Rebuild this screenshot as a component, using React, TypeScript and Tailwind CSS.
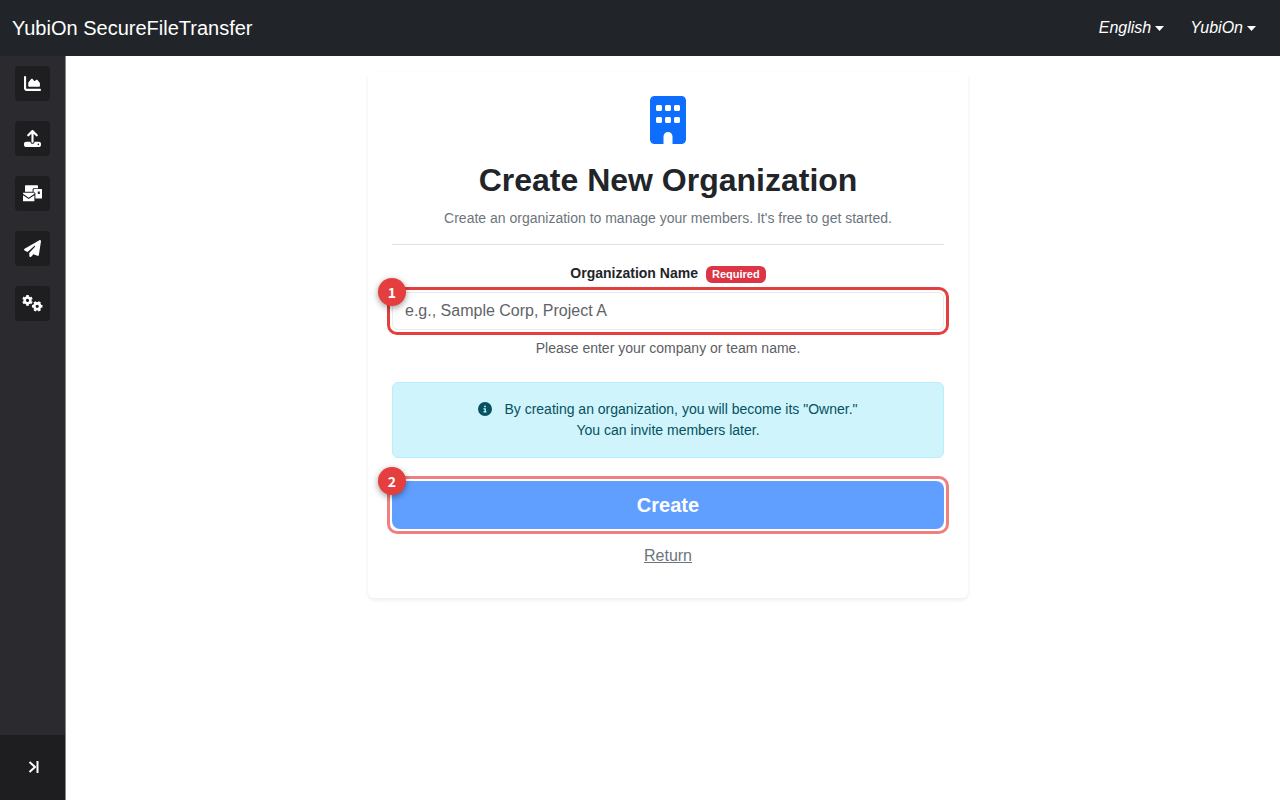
import type { ReactNode } from "react";
import { FaBuilding, FaChartArea, FaCircleInfo, FaPaperPlane, FaUpload } from "react-icons/fa6";

function Gear({ x, y, turn }: { x: number; y: number; turn: number }) {
  return (
    <g transform={`translate(${x} ${y}) rotate(${turn})`} fill="none" stroke="currentColor">
      <circle r="2.9" strokeWidth="2.6" />
      <circle r="4.4" strokeWidth="1.8" pathLength="12" strokeDasharray="1.1 0.9" strokeDashoffset="0.55" />
    </g>
  );
}

function GearsIcon() {
  return (
    <svg width="21" height="17" viewBox="0 0 21 17" aria-hidden="true">
      <Gear x={5.5} y={5.4} turn={30} />
      <Gear x={15.2} y={11.3} turn={0} />
    </svg>
  );
}

function MailIcon() {
  return (
    <svg width="19" height="17" viewBox="0 0 19 17" fill="currentColor" aria-hidden="true">
      <path d="M2.6 0.3h11.8a.6.6 0 0 1 .6.6v2.3h-4.2a1.2 1.2 0 0 0-1.2 1.2v2.3H2V.9a.6.6 0 0 1 .6-.6z" />
      <path
        fillRule="evenodd"
        d="M11.2 4h7.2a.6.6 0 0 1 .6.6v8.3a.6.6 0 0 1-.6.6h-6V8.6a1.4 1.4 0 0 0-1.4-1.4h-.4V4.6a.6.6 0 0 1 .6-.6zM14.8 6.6v2.4h2V6.6z"
      />
      <path d="M0 7.8h11.4v1L5.7 12.8 0 8.8z" />
      <path d="M0 10.2l5.7 3.9 5.7-3.9v5.5a.6.6 0 0 1-.6.6H.6a.6.6 0 0 1-.6-.6z" />
    </svg>
  );
}

const navItems = [
  { label: "Dashboard", icon: <FaChartArea size={17} /> },
  { label: "Upload", icon: <FaUpload size={17} /> },
  { label: "Mailboxes", icon: <MailIcon /> },
  { label: "Send", icon: <FaPaperPlane size={17} /> },
  { label: "Settings", icon: <GearsIcon /> },
];

function MenuButton({ children }: { children: ReactNode }) {
  return (
    <button type="button" className="flex items-center gap-1 text-base italic text-white">
      {children}
      <svg width="9" height="5" viewBox="0 0 9 5" fill="currentColor" aria-hidden="true">
        <path d="M0 0h9L4.5 5z" />
      </svg>
    </button>
  );
}

function Callout({ step, faded, children }: { step: number; faded?: boolean; children: ReactNode }) {
  return (
    <div className="relative">
      {children}
      <div
        className={
          "pointer-events-none absolute -inset-[5px] rounded-[10px] border-3 " +
          (faded ? "border-[#f08080]" : "border-[#e53e3e]")
        }
      />
      <span className="absolute -left-3.5 -top-3.5 flex size-7 items-center justify-center rounded-full bg-[#e53e3e] font-['Noto_Sans_CJK_JP',sans-serif] text-sm font-bold text-white shadow-[0_2px_6px_rgba(0,0,0,0.4)]">
        {step}
      </span>
    </div>
  );
}

export default function App() {
  return (
    <div className="flex min-h-screen flex-col bg-white font-['Liberation_Sans',Arial,sans-serif] text-[#212529]">
      <header className="flex h-14 items-center justify-between bg-[#212529] pl-3 pr-6">
        <a href="#" className="text-xl text-white">
          YubiOn SecureFileTransfer
        </a>
        <div className="flex items-center gap-[26px]">
          <MenuButton>English</MenuButton>
          <MenuButton>YubiOn</MenuButton>
        </div>
      </header>

      <div className="flex grow">
        <aside className="flex w-[66px] shrink-0 flex-col justify-between border-r border-[#87878b] bg-[#2b2a2f]">
          <nav className="flex flex-col items-center gap-5 pt-2.5">
            {navItems.map((item) => (
              <a
                key={item.label}
                href="#"
                aria-label={item.label}
                className="flex size-[35px] items-center justify-center rounded-sm bg-[#1e1e20] text-white"
              >
                {item.icon}
              </a>
            ))}
          </nav>
          <button
            type="button"
            aria-label="Expand menu"
            className="flex h-[65px] items-center justify-center bg-[#1e1e20] pb-0.5 pl-0.5 text-white"
          >
            <svg width="12" height="14" viewBox="0 0 12 14" fill="none" stroke="currentColor" strokeWidth="2" aria-hidden="true">
              <path d="M1.5 2l5.5 5-5.5 5" />
              <path d="M9.5 1v12" />
            </svg>
          </button>
        </aside>

        <main className="grow py-4 pl-1.5 pr-4">
          <section className="mx-auto max-w-[600px] rounded-md bg-white p-6 text-center shadow-[0_2px_4px_rgba(0,0,0,0.075)]">
            <FaBuilding size={48} className="mx-auto text-[#0d6efd]" />
            <h1 className="mt-4 text-[32px] font-bold leading-10">Create New Organization</h1>
            <p className="mt-2 text-sm leading-5 text-[#6c757d]">
              Create an organization to manage your members. It's free to get started.
            </p>
            <hr className="mt-4 border-[#dedfdf]" />

            <form onSubmit={(e) => e.preventDefault()}>
              <div className="mb-1.5 mt-4 flex items-center justify-center gap-2">
                <label htmlFor="org-name" className="text-sm font-bold leading-[25px]">
                  Organization Name
                </label>
                <span className="mt-0.5 rounded-md bg-[#dc3545] px-1.5 text-[11px] font-bold leading-[17px] text-white">
                  Required
                </span>
              </div>
              <Callout step={1}>
                <input
                  id="org-name"
                  type="text"
                  placeholder="e.g., Sample Corp, Project A"
                  className="block h-[38px] w-full rounded-md border border-[#e9ebed] bg-white px-3 text-base outline-none placeholder:text-[#5f6468]"
                />
              </Callout>
              <p className="mt-2 text-sm leading-5 text-[#5b6065]">Please enter your company or team name.</p>

              <div className="mt-6 rounded-md border border-[#b6effb] bg-[#cff4fc] p-4 text-sm leading-[21px] text-[#055160]">
                <FaCircleInfo size={14} className="mr-3 inline-block align-[-2px]" />
                By creating an organization, you will become its "Owner."
                <br />
                You can invite members later.
              </div>

              <div className="mt-[23px]">
                <Callout step={2} faded>
                  <button type="submit" className="block h-12 w-full rounded-lg bg-[#609fff] text-xl font-bold text-white">
                    Create
                  </button>
                </Callout>
              </div>
              <a href="#" className="mt-2 inline-block h-[37px] py-[7px] text-base leading-6 text-[#6c757d] underline">
                Return
              </a>
            </form>
          </section>
        </main>
      </div>
    </div>
  );
}
